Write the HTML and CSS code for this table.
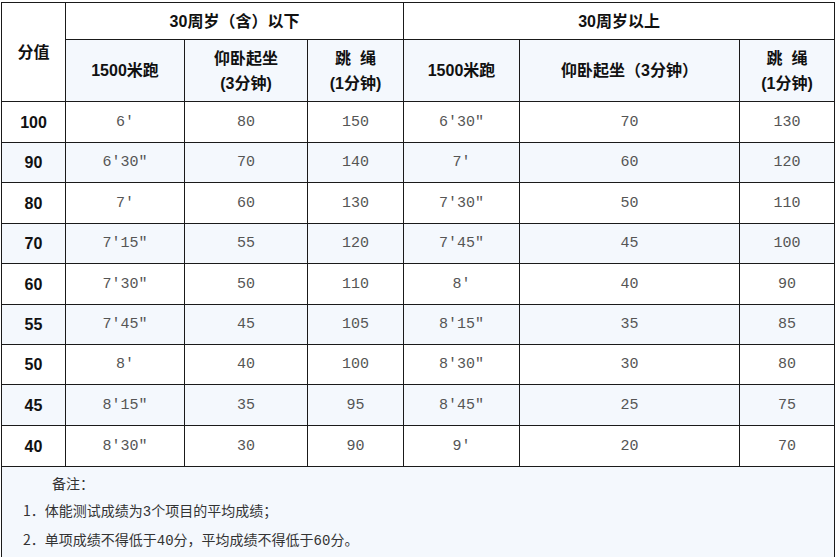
FILE: index.html
```html
<!DOCTYPE html>
<html lang="zh-CN">
<head>
<meta charset="utf-8">
<title>体能测试评分标准</title>
<link rel="stylesheet" href="styles.css">
</head>
<body>
<table class="score">
  <colgroup>
    <col class="c0"><col class="c1"><col class="c2"><col class="c3"><col class="c4"><col class="c5"><col class="c6">
  </colgroup>
  <tbody>
  <tr class="h1">
    <th rowspan="2">分值</th>
    <th colspan="3">30周岁<span class="pl">（</span>含<span class="pr">）</span>以下</th>
    <th colspan="3">30周岁以上</th>
  </tr>
  <tr class="h2 alt">
    <th>1500米跑</th>
    <th>仰卧起坐<br>(3分钟)</th>
    <th>跳&nbsp;&nbsp;绳<br>(1分钟)</th>
    <th>1500米跑</th>
    <th>仰卧起坐<span class="pl">（</span>3分钟<span class="pr">）</span></th>
    <th>跳&nbsp;&nbsp;绳<br>(1分钟)</th>
  </tr>
  <tr class="r41"><th>100</th><td>6′</td><td>80</td><td>150</td><td>6′30″</td><td>70</td><td>130</td></tr>
  <tr class="r40 alt"><th>90</th><td>6′30″</td><td>70</td><td>140</td><td>7′</td><td>60</td><td>120</td></tr>
  <tr class="r41"><th>80</th><td>7′</td><td>60</td><td>130</td><td>7′30″</td><td>50</td><td>110</td></tr>
  <tr class="r40 alt"><th>70</th><td>7′15″</td><td>55</td><td>120</td><td>7′45″</td><td>45</td><td>100</td></tr>
  <tr class="r41"><th>60</th><td>7′30″</td><td>50</td><td>110</td><td>8′</td><td>40</td><td>90</td></tr>
  <tr class="r40 alt"><th>55</th><td>7′45″</td><td>45</td><td>105</td><td>8′15″</td><td>35</td><td>85</td></tr>
  <tr class="r40"><th>50</th><td>8′</td><td>40</td><td>100</td><td>8′30″</td><td>30</td><td>80</td></tr>
  <tr class="r41 alt"><th>45</th><td>8′15″</td><td>35</td><td>95</td><td>8′45″</td><td>25</td><td>75</td></tr>
  <tr class="r41"><th>40</th><td>8′30″</td><td>30</td><td>90</td><td>9′</td><td>20</td><td>70</td></tr>
  <tr class="notes alt">
    <td colspan="7">
      <p class="lead">备注：</p>
      <p>1．体能测试成绩为<span class="m">3</span>个项目的平均成绩；</p>
      <p>2．单项成绩不得低于<span class="m">40</span>分，平均成绩不得低于<span class="m">60</span>分。</p>
    </td>
  </tr>
  </tbody>
</table>
</body>
</html>
```

FILE: styles.css
```css
html, body {
  margin: 0;
  padding: 0;
  background: #ffffff;
}

.score {
  margin: 2px 0 0 1px;
  width: 833px;
  border-collapse: collapse;
  table-layout: fixed;
  font-family: "Liberation Sans", "Noto Sans CJK SC", sans-serif;
}

.c0 { width: 64px; }
.c1 { width: 119px; }
.c2 { width: 123px; }
.c3 { width: 96px; }
.c4 { width: 116px; }
.c5 { width: 220px; }
.c6 { width: 95px; }

.score th,
.score td {
  border: 1px solid #1a1a1a;
  padding: 0;
  text-align: center;
  vertical-align: middle;
}

.score tr.alt th,
.score tr.alt td {
  background: #f4f8fd;
}

.score th {
  font-size: 16px;
  font-weight: bold;
  color: #111;
  line-height: 25px;
}

.pl,
.pr {
  display: inline-block;
  width: 16px;
}

.pl { text-align: right; }
.pr { text-align: left; }

.h1 { height: 37px; }
.h2 { height: 62px; }
.r40 { height: 40px; }
.r41 { height: 41px; }

.score td {
  font-family: "Liberation Mono", "DejaVu Sans Mono", monospace;
  font-size: 15px;
  color: #555;
}

.notes td {
  height: 88px;
  text-align: left;
  padding: 3px 0 0 21px;
  vertical-align: top;
  font-family: "Noto Sans CJK SC", sans-serif;
  font-size: 14px;
  color: #333;
}

.notes p {
  margin: 0;
  line-height: 27px;
}

.notes .lead {
  text-indent: 29px;
}

.notes .m {
  font-family: "Liberation Mono", monospace;
  font-size: 14px;
}
```
